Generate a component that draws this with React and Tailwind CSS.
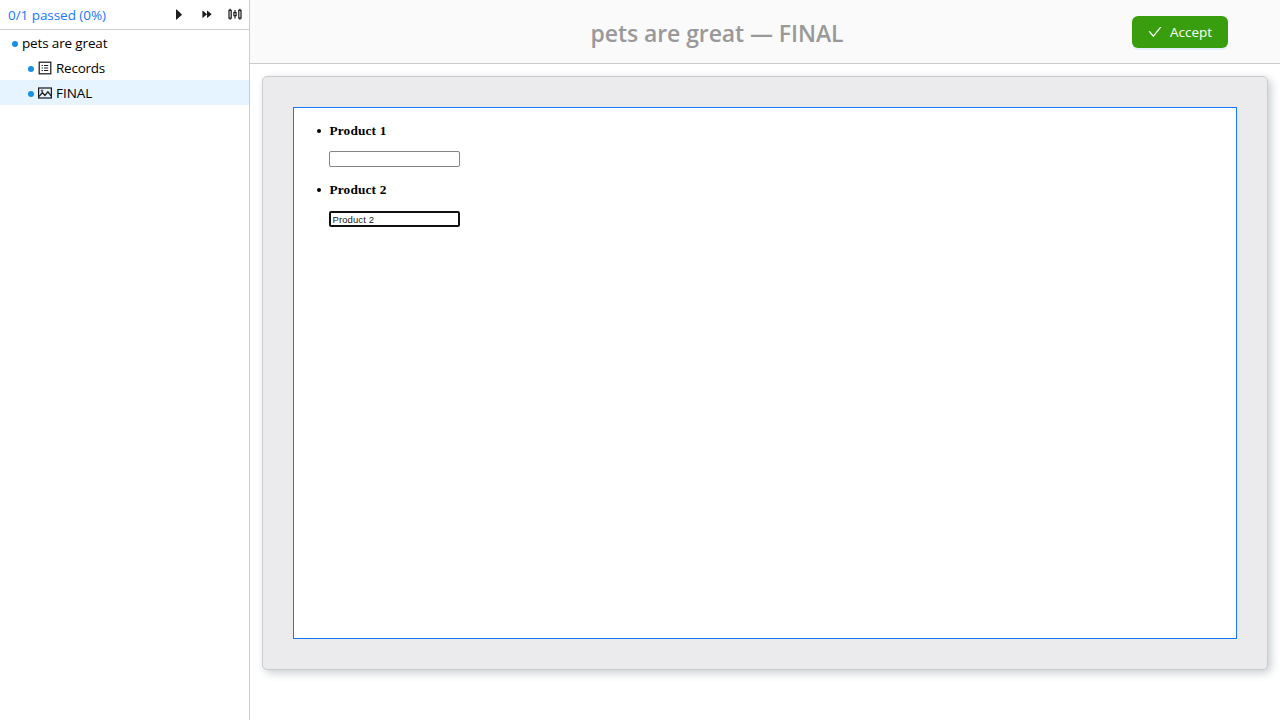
import React from "react";

function PlayIcon() {
  return (
    <svg width="14" height="14" viewBox="0 0 14 14" fill="#1f1f1f">
      <path d="M4 1.900v9.400a.4.4 0 0 0 .7.3l5-4.600a.5.5 0 0 0 0-.8l-5-4.600a.4.4 0 0 0-.7.3z" />
    </svg>
  );
}

function ForwardIcon() {
  return (
    <svg width="14" height="14" viewBox="0 0 14 14" fill="#1f1f1f">
      <path d="M2.400 3v6.600c0 .3.3.4.5.2l3.900-3.200a.4.4 0 0 0 0-.6L2.900 2.800c-.2-.2-.5-.1-.5.2z" />
      <path d="M7 3v6.600c0 .3.3.4.5.2l3.900-3.200a.4.4 0 0 0 0-.6L7.500 2.800c-.2-.2-.5-.1-.5.2z" />
    </svg>
  );
}

function SlidersIcon() {
  return (
    <svg width="14" height="14" viewBox="0 0 14 14" fill="none" stroke="#1f1f1f">
      <path d="M2.100 .8v1.500M2.100 10.200v1.500M7 2v2.600M7 7.800v2.600M11.900 .8v1.500M11.900 10.200v1.500" strokeWidth="1.200" />
      <path d="M1 2.300h2.200v7.900H1zM10.800 2.300h2.200v7.900h-2.200z" strokeWidth="1.250" />
      <path d="M5.900 4.700h2.200v3H5.900z" strokeWidth="1.200" />
    </svg>
  );
}

function RecordsIcon() {
  return (
    <svg width="14" height="14" viewBox="0 0 14 14" fill="none" stroke="#1f1f1f">
      <rect x="1.200" y="1.200" width="11.600" height="11.600" strokeWidth="1.250" />
      <path d="M6 4.500h4.200M6 7h4.200M6 9.500h4.200" strokeWidth="1" />
      <path d="M3.600 4.500h1.300M3.600 7h1.300M3.600 9.500h1.300" strokeWidth="1.100" />
    </svg>
  );
}

function PictureIcon() {
  return (
    <svg width="14" height="14" viewBox="0 0 14 14" fill="none" stroke="#1f1f1f">
      <rect x=".6" y="2" width="12.800" height="10" strokeWidth="1.250" />
      <path d="M1.200 10.400l3.200-3.900 2.500 2.900 3-3.600 3.200 4.100" strokeWidth="1.300" />
      <circle cx="4" cy="4.700" r=".8" strokeWidth=".9" />
    </svg>
  );
}

function CheckIcon() {
  return (
    <svg width="14" height="14" viewBox="64 64 896 896" fill="currentColor">
      <path d="M912 190h-69.900c-9.800 0-19.100 4.500-25.100 12.200L404.700 724.500 207 474a32 32 0 0 0-25.100-12.200H112c-6.700 0-10.400 7.700-6.300 12.900l273.900 347c12.800 16.200 37.400 16.200 50.300 0l488.400-618.900c4.100-5.100.4-12.800-6.300-12.800z" />
    </svg>
  );
}

function Dot() {
  return <span className="mt-0.5 size-1.5 shrink-0 rounded-full bg-[#1890e8]" />;
}

function ProductItem({ name, children }) {
  return (
    <li>
      <div className="flex h-[17px] items-center">
        <span className="mt-0.5 ml-[23px] size-1 rounded-full bg-black" />
        <h3 className="ml-[8.5px] pt-px font-['Liberation_Serif',serif] text-[13.3px] leading-[17px] font-bold tracking-[0.16px] text-black">{name}</h3>
      </div>
      {children}
    </li>
  );
}

export default function App() {
  return (
    <div className="flex h-screen w-full overflow-hidden bg-white font-['Open_Sans','Noto_Sans',sans-serif] text-sm text-black">
      <aside className="w-[250px] shrink-0 border-r border-[#ccc]">
        <div className="flex h-[30px] items-center justify-between border-b border-[#ccc] pr-[7px] pl-2">
          <span className="pt-0.5 text-[13.5px] tracking-[-0.05px] whitespace-nowrap text-[#1677ff]">0/1 passed (0%)</span>
          <div className="flex gap-3.5">
            <PlayIcon />
            <ForwardIcon />
            <SlidersIcon />
          </div>
        </div>
        <nav className="text-[13.5px] leading-[25px]">
          <div className="flex h-[25px] items-center pl-3">
            <Dot />
            <span className="ml-1 pt-px tracking-[-0.15px]">pets are great</span>
          </div>
          <div className="flex h-[25px] items-center pl-7">
            <Dot />
            <span className="ml-1"><RecordsIcon /></span>
            <span className="ml-1 pt-0.5 tracking-[-0.25px]">Records</span>
          </div>
          <div className="flex h-[25px] items-center bg-[#e6f4ff] pl-7">
            <Dot />
            <span className="ml-1"><PictureIcon /></span>
            <span className="ml-1 pt-0.5 tracking-[-0.05px]">FINAL</span>
          </div>
        </nav>
      </aside>
      <main className="flex min-w-0 flex-1 flex-col">
        <header className="flex h-16 shrink-0 items-center border-b border-[#ccc] bg-[#fafafa] pr-[52px]">
          <h1 className="flex-1 pt-0.5 pl-[52px] text-center text-[23px] leading-8 font-semibold tracking-[-0.08px] text-[#999]">pets are great — FINAL</h1>
          <button className="flex h-8 w-24 items-center justify-center gap-2 rounded-md bg-[#389e0d] text-[13.5px] tracking-[-0.05px] text-white shadow-[0_2px_0_#e6f0fa]">
            <CheckIcon />
            <span className="pt-0.5">Accept</span>
          </button>
        </header>
        <section className="mx-3 mt-3 h-[594px] rounded-[5px] border border-[#ccc] bg-[#ebebed] p-[30px] shadow-[3px_3px_10px_#c8cdd2]">
          <div className="h-full border border-[#1677ff] bg-white pt-[13px]">
            <ul>
              <ProductItem name="Product 1">
                <input className="mt-[13px] ml-[35px] block h-4 w-[131px] rounded-[2px] border border-[#858585] bg-white px-0.5" aria-label="Product 1" />
              </ProductItem>
              <li className="h-[13px]" />
              <ProductItem name="Product 2">
                <input className="mt-[14px] ml-[35px] block h-4 w-[131px] rounded-[2px] border-2 border-[#101010] bg-white px-[1.5px] font-['Liberation_Sans',sans-serif] text-[9.5px] leading-3 tracking-[0.1px] text-[#222] outline-none" defaultValue="Product 2" aria-label="Product 2" />
              </ProductItem>
            </ul>
          </div>
        </section>
      </main>
    </div>
  );
}
